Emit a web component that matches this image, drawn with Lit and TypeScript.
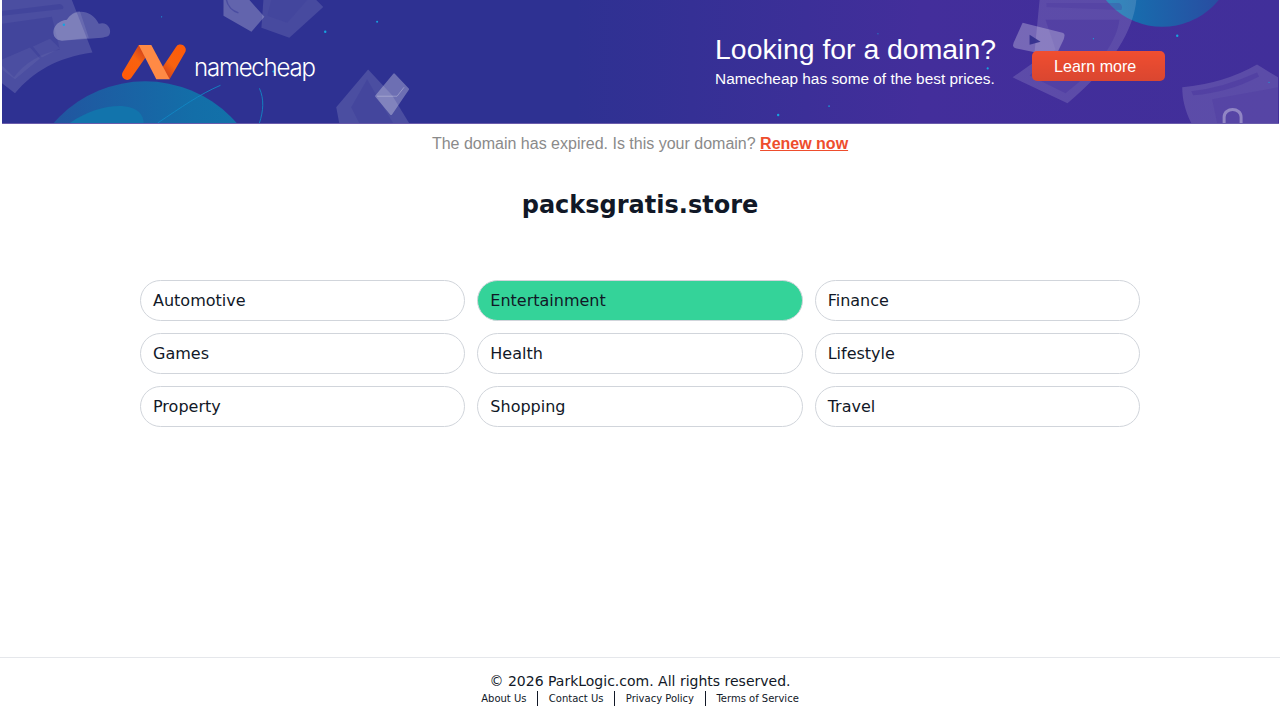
import { LitElement, html, css, svg } from "lit";
import { customElement } from "lit/decorators.js";

const CATS = ["Automotive", "Entertainment", "Finance", "Games", "Health", "Lifestyle", "Property", "Shopping", "Travel"];
const DOTS = [[62,25,1.2],[160,17,.6],[324,32,1.2],[376,22,1],[778,116,1.2],[829,107,.8],[878,34,.6],[988,69,1.1],[1178,36,1.2],[1094,39,.6],[1270,83,.6],[272,72,1]];

const decor = svg`
<svg class="decor" viewBox="0 0 1280 124" preserveAspectRatio="none" xmlns="http://www.w3.org/2000/svg">
  <defs>
    <linearGradient id="bg" x1="0" y1="0" x2="1" y2="0">
      <stop offset=".45" stop-color="#2e3192"/><stop offset=".72" stop-color="#432e9b"/><stop offset="1" stop-color="#412f9a"/>
    </linearGradient>
    <linearGradient id="globe" x1="0" y1="0" x2="1" y2="0">
      <stop offset="0" stop-color="#24509e"/><stop offset=".7" stop-color="#136ea8"/><stop offset="1" stop-color="#1273aa"/>
    </linearGradient>
    <linearGradient id="globe2" x1="0" y1="0" x2="1" y2="0">
      <stop offset="0" stop-color="#0f7cb4"/><stop offset="1" stop-color="#2c479f"/>
    </linearGradient>
  </defs>
  <rect width="1280" height="124" fill="url(#bg)"/>
  <circle cx="143.500" cy="203" r="121" fill="url(#globe)"/>
  <path d="M68 124C85 112 105 106 122 107C136 108 142 116 142 124Z" fill="#1274ac"/>
  <path d="M156 124C180 108 198 95 219 86M258 89C263 100 262 112 258 124" fill="none" stroke="#1187c4" stroke-width=".9"/>
  <circle cx="1163" cy="-45.600" r="72.600" fill="url(#globe2)"/>
  <g fill="#fff">
    <path d="M0 0H70L90.700 53C55 58 32 72 13 94L0 84Z" opacity=".14"/>
    <path d="M0 11L58 4Q63 6 61 9L0 16ZM0 24L50 17L58 50C40 54 24 62 12 78L0 66Z" fill="#2e3192" opacity=".3"/>
    <path d="M0 60L28 48L38 59L13 80L0 70ZM31 47L48 39L58 49L40 58Z" fill="#fff" opacity=".05"/>
    <path d="M60 41C48 41 48 22 65 20C72 8 90 9 97 24C105 21 110 29 108 34C107 37 105 37 100 38Z" opacity=".2"/>
    <path d="M60 41C48 41 48 22 65 20C70 12 76 11 78 11L87 38Z" opacity=".1"/>
    <path d="M262 0H315L322 7L288 38L260 28Z" opacity=".12"/>
    <path d="M270 0H306L286 23L266 16Z" fill="#2e3192" opacity=".15"/>
    <path d="M222 0H248L263 17L250 32L222 16Z" opacity=".25"/>
    <path d="M225 0C226 6 231 11 237 13" fill="none" stroke="#2e3192" stroke-width="1.500" opacity=".45"/>
    <path d="M367 70L391 96L408 124H338L335 108Z" opacity=".14"/>
    <path d="M366 80L350 108L358 124H392L380 104Z" fill="#2e3192" opacity=".25"/>
    <path d="M393 75L407 90L390 115L375 97Z" opacity=".3" stroke="#fff" stroke-width="2" stroke-linejoin="round"/>
    <path d="M376 97H396L403 88" fill="none" stroke="#fff" stroke-width=".7" opacity=".4"/>
    <path d="M1040 0H1137C1134 30 1115 65 1068 104L1013 78L1034 63Z" opacity=".14"/>
    <path d="M1046 20L1120 20C1118 40 1100 68 1066 94L1030 76L1056 50Z" fill="#432e9b" opacity=".35"/>
    <path d="M1047 3H1120Q1124 6 1122 10L1047 7Z" fill="#432e9b" opacity=".25"/>
    <path d="M1023 23L1063 33C1066 34 1065 37 1064 40L1056 57L1017 49C1013 48 1013 46 1014 43Z" opacity=".28"/>
    <path d="M1030 35L1041 42L1030 45Z" fill="#2e2a8a" opacity=".85"/>
    <path d="M1183 88Q1225 84 1258 65L1279 78V124H1192C1186 112 1183 100 1183 88Z" opacity=".14"/>
    <path d="M1192 92Q1225 88 1258 73L1260 77Q1230 93 1194 96Z" fill="#432e9b" opacity=".35"/>
    <path d="M1213 100L1279 88V124H1218Z" fill="#432e9b" opacity=".22"/>
    <path d="M1225 124V118C1225 108 1242 108 1242 118V124" fill="none" stroke="#fff" stroke-width="3" opacity=".35"/>
  </g>
  ${DOTS.map(([x, y, r]) => svg`<circle cx=${x} cy=${y} r=${r} fill="#16a3e0"/>`)}
</svg>`;

const logo = svg`
<svg class="mark" viewBox="0 0 64 36" xmlns="http://www.w3.org/2000/svg">
  <defs>
    <linearGradient id="la" x1=".1" y1="1" x2=".8" y2="0">
      <stop offset="0" stop-color="#ff5a08"/><stop offset=".6" stop-color="#f8620f"/><stop offset="1" stop-color="#c63b20"/>
    </linearGradient>
    <linearGradient id="ra" x1=".9" y1="0" x2=".2" y2="1">
      <stop offset="0" stop-color="#ff5a08"/><stop offset=".6" stop-color="#f8620f"/><stop offset="1" stop-color="#c63b20"/>
    </linearGradient>
  </defs>
  <path d="M16.700 1L.8 28A5 5 0 0 0 9.500 33.500L26 10L20 1Z" fill="url(#la)"/>
  <path d="M54 3A5.200 5.200 0 0 1 63 8.500L47.700 35H38L40 24Z" fill="url(#ra)"/>
  <path d="M16.700 1H29.300L47.700 35.300H34.300Z" fill="#ff8a45"/>
</svg>`;

@customElement("app-root")
export class AppRoot extends LitElement {
  static styles = css`
    :host { display: flex; flex-direction: column; min-height: 720px; background: #fff; color: #111827; font-family: "DejaVu Sans", sans-serif; }
    .banner { position: relative; height: 124px; margin-left: 2px; margin-right: 1px; box-sizing: border-box; display: flex; align-items: stretch; overflow: hidden; border-bottom: 1px solid #6a5cab; }
    .decor { position: absolute; inset: 0; width: 100%; height: 100%; }
    .content { position: relative; flex: 1; display: flex; font-family: "Liberation Sans", sans-serif; color: #fff; }
    .brand { display: flex; align-items: flex-start; gap: 8px; margin: 44px 0 0 120px; }
    .mark { width: 64px; height: 36px; display: block; }
    .word { font-family: Inter, sans-serif; font-weight: 300; font-size: 24px; line-height: 30px; margin-top: 9px; letter-spacing: -1.200px; }
    .pitch { margin: 32px 0 0 auto; }
    .pitch h2 { margin: 0; font-weight: 400; font-size: 28.400px; line-height: 35px; white-space: nowrap; }
    .pitch p { margin: 1px 0 0; font-size: 15.400px; line-height: 21px; white-space: nowrap; }
    .cta { margin: 51px 114px 0 36px; width: 133px; height: 30px; box-sizing: border-box; padding-left: 22px; border-radius: 5px; background: linear-gradient(#f04e30, #da4630); font-size: 16.100px; line-height: 30px; color: #fff; }
    .notice { margin: 0; text-align: center; font-family: "Liberation Sans", sans-serif; font-size: 16px; line-height: 18px; padding-top: 11px; color: #8a8a8a; }
    .notice a { color: #ee4d2d; font-weight: 700; text-decoration: underline; }
    h1 { margin: 0; padding-top: 36px; text-align: center; font-size: 24px; line-height: 32px; font-weight: 700; color: #111827; }
    .grid { display: grid; grid-template-columns: repeat(3, 1fr); gap: 12px; width: 1000px; margin: 59px auto 0; }
    .cat { height: 41px; box-sizing: border-box; padding: 0 12px; border: 1px solid #d1d5db; border-radius: 999px; font-size: 16px; line-height: 39px; color: #111827; }
    .cat.on { background: #34d399; }
    main { flex: 1; }
    footer { border-top: 1px solid #e5e7eb; height: 63px; box-sizing: border-box; padding-top: 14px; text-align: center; font-size: 14px; line-height: 18px; color: #111827; }
    .links { display: flex; justify-content: center; align-items: center; height: 16px; font-size: 10px; }
    .links span { padding: 0 10.700px; line-height: 15px; border-left: 1px solid #111827; }
    .links span:first-child { border-left: 0; }
  `;

  render() {
    return html`
      <div class="banner">
        ${decor}
        <div class="content">
          <div class="brand">${logo}<span class="word">namecheap</span></div>
          <div class="pitch"><h2>Looking for a domain?</h2><p>Namecheap has some of the best prices.</p></div>
          <div class="cta">Learn more</div>
        </div>
      </div>
      <main>
        <p class="notice">The domain has expired. Is this your domain? <a href="#">Renew now</a></p>
        <h1>packsgratis.store</h1>
        <div class="grid">
          ${CATS.map((c) => html`<div class="cat ${c === "Entertainment" ? "on" : ""}">${c}</div>`)}
        </div>
      </main>
      <footer>
        <div>© 2026 ParkLogic.com. All rights reserved.</div>
        <div class="links"><span>About Us</span><span>Contact Us</span><span>Privacy Policy</span><span>Terms of Service</span></div>
      </footer>
    `;
  }
}
